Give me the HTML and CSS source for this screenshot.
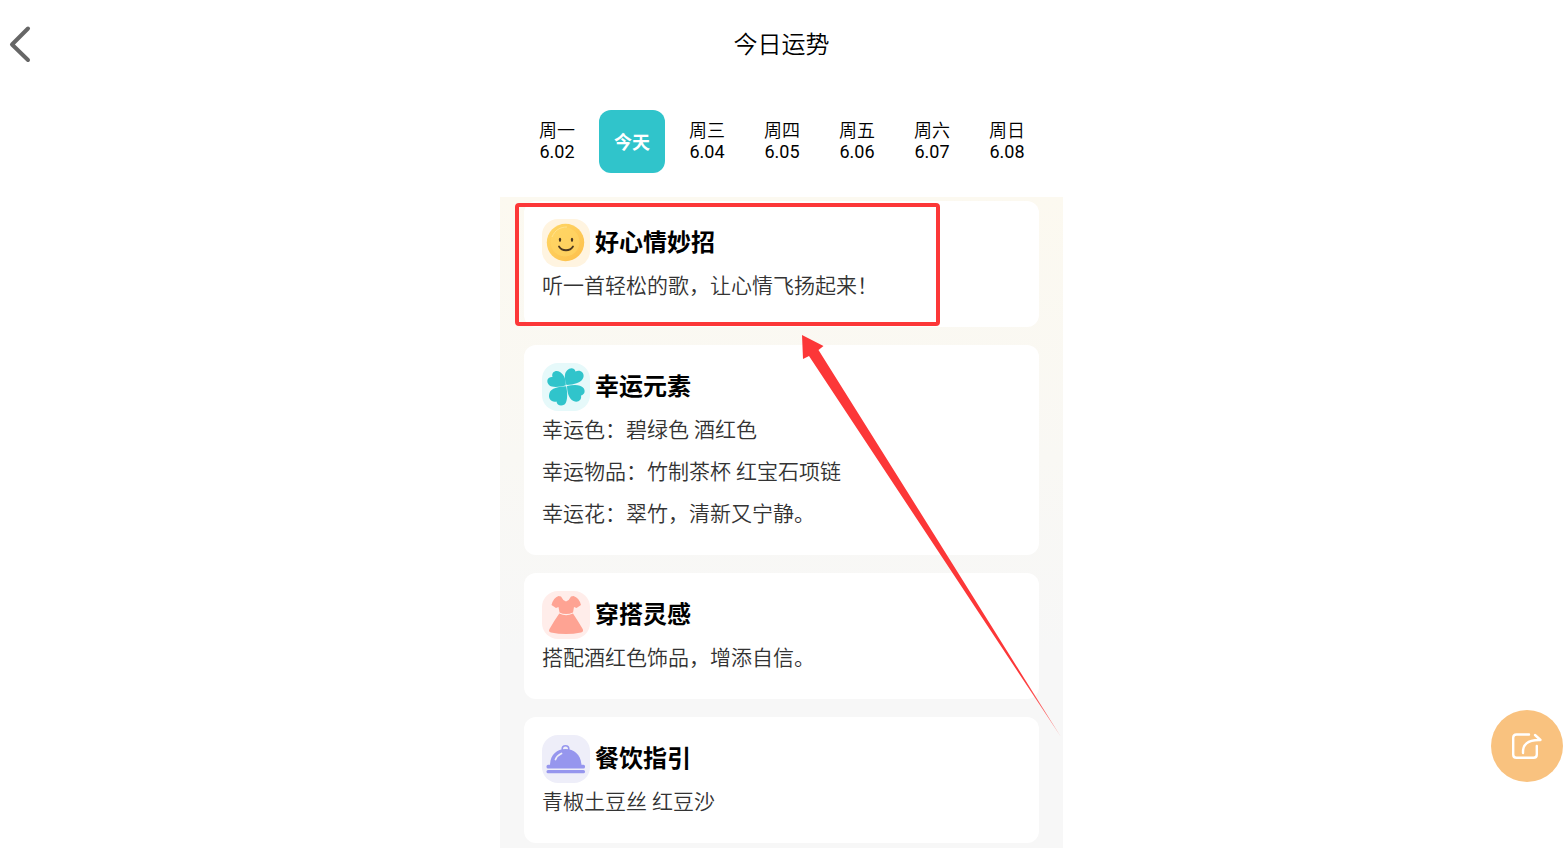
FILE: index.html
```html
<!DOCTYPE html>
<html lang="zh-CN">
<head>
  <meta charset="utf-8">
  <meta name="viewport" content="width=device-width, initial-scale=1">
  <title>今日运势</title>
  <link rel="stylesheet" href="styles.css">
</head>
<body>
  <header class="header">
    <button class="back" type="button" aria-label="返回">
      <svg width="40" height="40" viewBox="0 0 40 40" fill="none" stroke="#666" stroke-width="4" stroke-linecap="round" stroke-linejoin="round">
        <path d="M28 4.5L12 20.5L28 36"/>
      </svg>
    </button>
    <h1>今日运势</h1>
  </header>

  <main class="page">
    <nav class="days">
      <button type="button" class="day">周一<span class="date">6.02</span></button>
      <button type="button" class="day active">今天</button>
      <button type="button" class="day">周三<span class="date">6.04</span></button>
      <button type="button" class="day">周四<span class="date">6.05</span></button>
      <button type="button" class="day">周五<span class="date">6.06</span></button>
      <button type="button" class="day">周六<span class="date">6.07</span></button>
      <button type="button" class="day">周日<span class="date">6.08</span></button>
    </nav>

    <div class="content">
      <section class="card">
        <div class="card-head">
          <svg class="icon" viewBox="0 0 48 48">
            <defs>
              <linearGradient id="face" x1="0" y1="0" x2="1" y2="1">
                <stop offset="0" stop-color="#ffd766"/>
                <stop offset="1" stop-color="#fdbf4b"/>
              </linearGradient>
            </defs>
            <rect width="48" height="48" rx="16" fill="#fff4e0"/>
            <circle cx="23.5" cy="23.5" r="18.7" fill="url(#face)"/>
            <circle cx="23" cy="23" r="14.5" fill="#ffd565" opacity=".65"/>
            <path d="M10 18C13 11 18 8 25 8" fill="none" stroke="#ffe38d" stroke-width="1"/>
            <ellipse cx="18" cy="20.8" rx="1.2" ry="2.1" fill="#4d3820"/>
            <ellipse cx="30" cy="20.8" rx="1.2" ry="2.1" fill="#4d3820"/>
            <path d="M17 27.5C20 32.5 28 32.5 31 27.5" fill="none" stroke="#4d3820" stroke-width="1.8" stroke-linecap="round"/>
          </svg>
          <h2>好心情妙招</h2>
        </div>
        <p>听一首轻松的歌，让心情飞扬起来！</p>
      </section>

      <section class="card">
        <div class="card-head">
          <svg class="icon" viewBox="0 0 48 48">
            <rect width="48" height="48" rx="16" fill="#e6f9fa"/>
            <g fill="#30c4cb">
              <path d="M23.8 22.3C18 24 10 25 7 22C3.500 18 6 13.500 10.500 14C9 9 14 6.500 18 9C22.500 12 23.800 16.500 23.800 22.300Z"/>
              <path d="M24.500 22C22.500 17 22 10 25 7.500C28.500 4 32.500 5 33.500 8.500C38 6.500 42.500 9.500 41.500 14C40 20 32 21.500 24.500 22Z"/>
              <path d="M25 23C31 21.500 38.500 21 41.500 25C44 28.500 42 32 39 32.500C40 37 36 40 31.500 38C26.500 35.500 25.300 29.500 25 23Z"/>
              <path d="M24.200 23.200C25.500 29.500 26 38.500 22.500 41.500C18.500 43.800 15 42 14.500 38.500C9.500 39.500 5.500 36 7.500 30C9 25 16.500 23.800 24.200 23.200Z"/>
            </g>
          </svg>
          <h2>幸运元素</h2>
        </div>
        <p>幸运色：碧绿色 酒红色</p>
        <p>幸运物品：竹制茶杯 红宝石项链</p>
        <p>幸运花：翠竹，清新又宁静。</p>
      </section>

      <section class="card">
        <div class="card-head">
          <svg class="icon" viewBox="0 0 48 48">
            <rect width="48" height="48" rx="16" fill="#ffedea"/>
            <g fill="#fea393">
              <path d="M16.500 5L19 5.500Q20.500 9 24 10.500Q27.500 9 29 5.500L31.500 5Q37 6.500 39 14L34.500 17L32 16L31 21.500Q24 24.500 17.500 21.500L16.500 16L14 17L9.500 14Q11.500 6.500 16.500 5Z"/>
              <path d="M17.300 22.500Q24 26 31 22.500Q36 30 40.700 38Q42 40.500 39 41.500Q24 44.500 9 41.500Q6 40.500 7.500 38Q12 30 17.300 22.500Z"/>
            </g>
          </svg>
          <h2>穿搭灵感</h2>
        </div>
        <p>搭配酒红色饰品，增添自信。</p>
      </section>

      <section class="card">
        <div class="card-head">
          <svg class="icon" viewBox="0 0 48 48">
            <rect width="48" height="48" rx="16" fill="#eeeef9"/>
            <circle cx="23.500" cy="14" r="3.300" fill="none" stroke="#9696ee" stroke-width="1.600"/>
            <path d="M8 30.500C8 20 14.500 14 23.500 14S39 20 39.500 30.500Z" fill="#9696ee"/>
            <rect x="4.500" y="29.800" width="38.500" height="3.800" rx="1.500" fill="#9696ee"/>
            <rect x="4.500" y="35" width="38.500" height="3.200" rx="1.500" fill="#9696ee"/>
            <path d="M13.500 24.500Q15 20.500 19.500 18.500" fill="none" stroke="#eeeef9" stroke-width="1.800" stroke-linecap="round"/>
          </svg>
          <h2>餐饮指引</h2>
        </div>
        <p>青椒土豆丝 红豆沙</p>
      </section>

      <!-- highlight box and arrow over the cards -->
      <div class="mark-box"></div>
      <svg class="mark-arrow" width="260" height="404" viewBox="0 0 260 404">
        <defs>
          <linearGradient id="tail" gradientUnits="userSpaceOnUse" x1="220" y1="340" x2="259" y2="402">
            <stop offset="0" stop-color="#fc3738"/>
            <stop offset="1" stop-color="#fc3738" stop-opacity=".6"/>
          </linearGradient>
        </defs>
        <path d="M0 0L21.500 11L16.500 15L259 402L7 21L1 24Z" fill="url(#tail)"/>
      </svg>
    </div>
  </main>

  <button class="share" type="button" aria-label="分享">
    <svg width="36" height="36" viewBox="0 0 36 36" fill="none" stroke="#fff" stroke-width="2.4" stroke-linecap="round" stroke-linejoin="round">
      <path d="M20 6.500H7.500Q4.200 6.500 4.200 9.800V26.500Q4.200 29.800 7.500 29.800H24.500Q27.800 29.800 27.800 26.500V18"/>
      <path d="M14 25C13.500 17 18 11.500 31.500 12L26 7"/>
    </svg>
  </button>
</body>
</html>
```

FILE: styles.css
```css
* {
  box-sizing: border-box;
}

body {
  margin: 0;
  min-height: 100vh;
  display: flex;
  flex-direction: column;
  background: #fff;
  color: #000;
  font-family: Roboto, "Noto Sans CJK SC", sans-serif;
}

button {
  padding: 0;
  border: none;
  background: none;
  color: inherit;
  font: inherit;
  cursor: pointer;
}

h1, h2, p {
  margin: 0;
}

.header {
  display: grid;
  grid-template-columns: 40px 1fr 40px;
  align-items: center;
  height: 88px;
}

.header h1 {
  padding-bottom: 4px;
  font-size: 24px;
  font-weight: 350;
  text-align: center;
}

.back svg {
  display: block;
}

.page {
  width: 36%;
  min-width: 563px;
  margin: 0 auto;
  flex: 1;
  display: flex;
  flex-direction: column;
}

.days {
  display: flex;
  justify-content: center;
  gap: 9px;
  padding: 22px 0 24px;
}

.day {
  width: 66px;
  height: 63px;
  padding: 0 0 2px 1px;
  border-radius: 12px;
  font-size: 18px;
  font-weight: 350;
  line-height: 21px;
}

.day.active {
  padding: 2px 0 0 1px;
  background: #30c4cb;
  color: #fff;
  font-weight: 700;
}

.date {
  display: block;
  font-weight: 400;
}

.content {
  position: relative;
  flex: 1;
  display: flex;
  flex-direction: column;
  gap: 18px;
  padding: 4px 24px;
  background: linear-gradient(#fcf9f0, #f9f8f4 40%, #f7f7f7 70%);
}

.card {
  padding: 18px 18px 20px;
  border-radius: 12px;
  background: #fff;
}

.card-head {
  display: flex;
  align-items: center;
  gap: 5px;
  margin-bottom: -2px;
}

.icon {
  width: 48px;
  height: 48px;
}

.card h2 {
  padding-bottom: 6px;
  font-size: 24px;
  font-weight: 700;
}

.card p {
  color: #333;
  font-size: 21px;
  font-weight: 350;
  line-height: 42px;
}

.mark-box {
  position: absolute;
  top: 6px;
  left: 15px;
  width: 425px;
  height: 123px;
  border: 4px solid #fc3738;
  border-radius: 4px;
}

.mark-arrow {
  position: absolute;
  top: 138px;
  left: 302px;
  pointer-events: none;
}

.share {
  position: fixed;
  right: 0;
  bottom: 66px;
  width: 72px;
  height: 72px;
  display: flex;
  align-items: center;
  justify-content: center;
  border-radius: 50%;
  background: #f9c27f;
}
```
